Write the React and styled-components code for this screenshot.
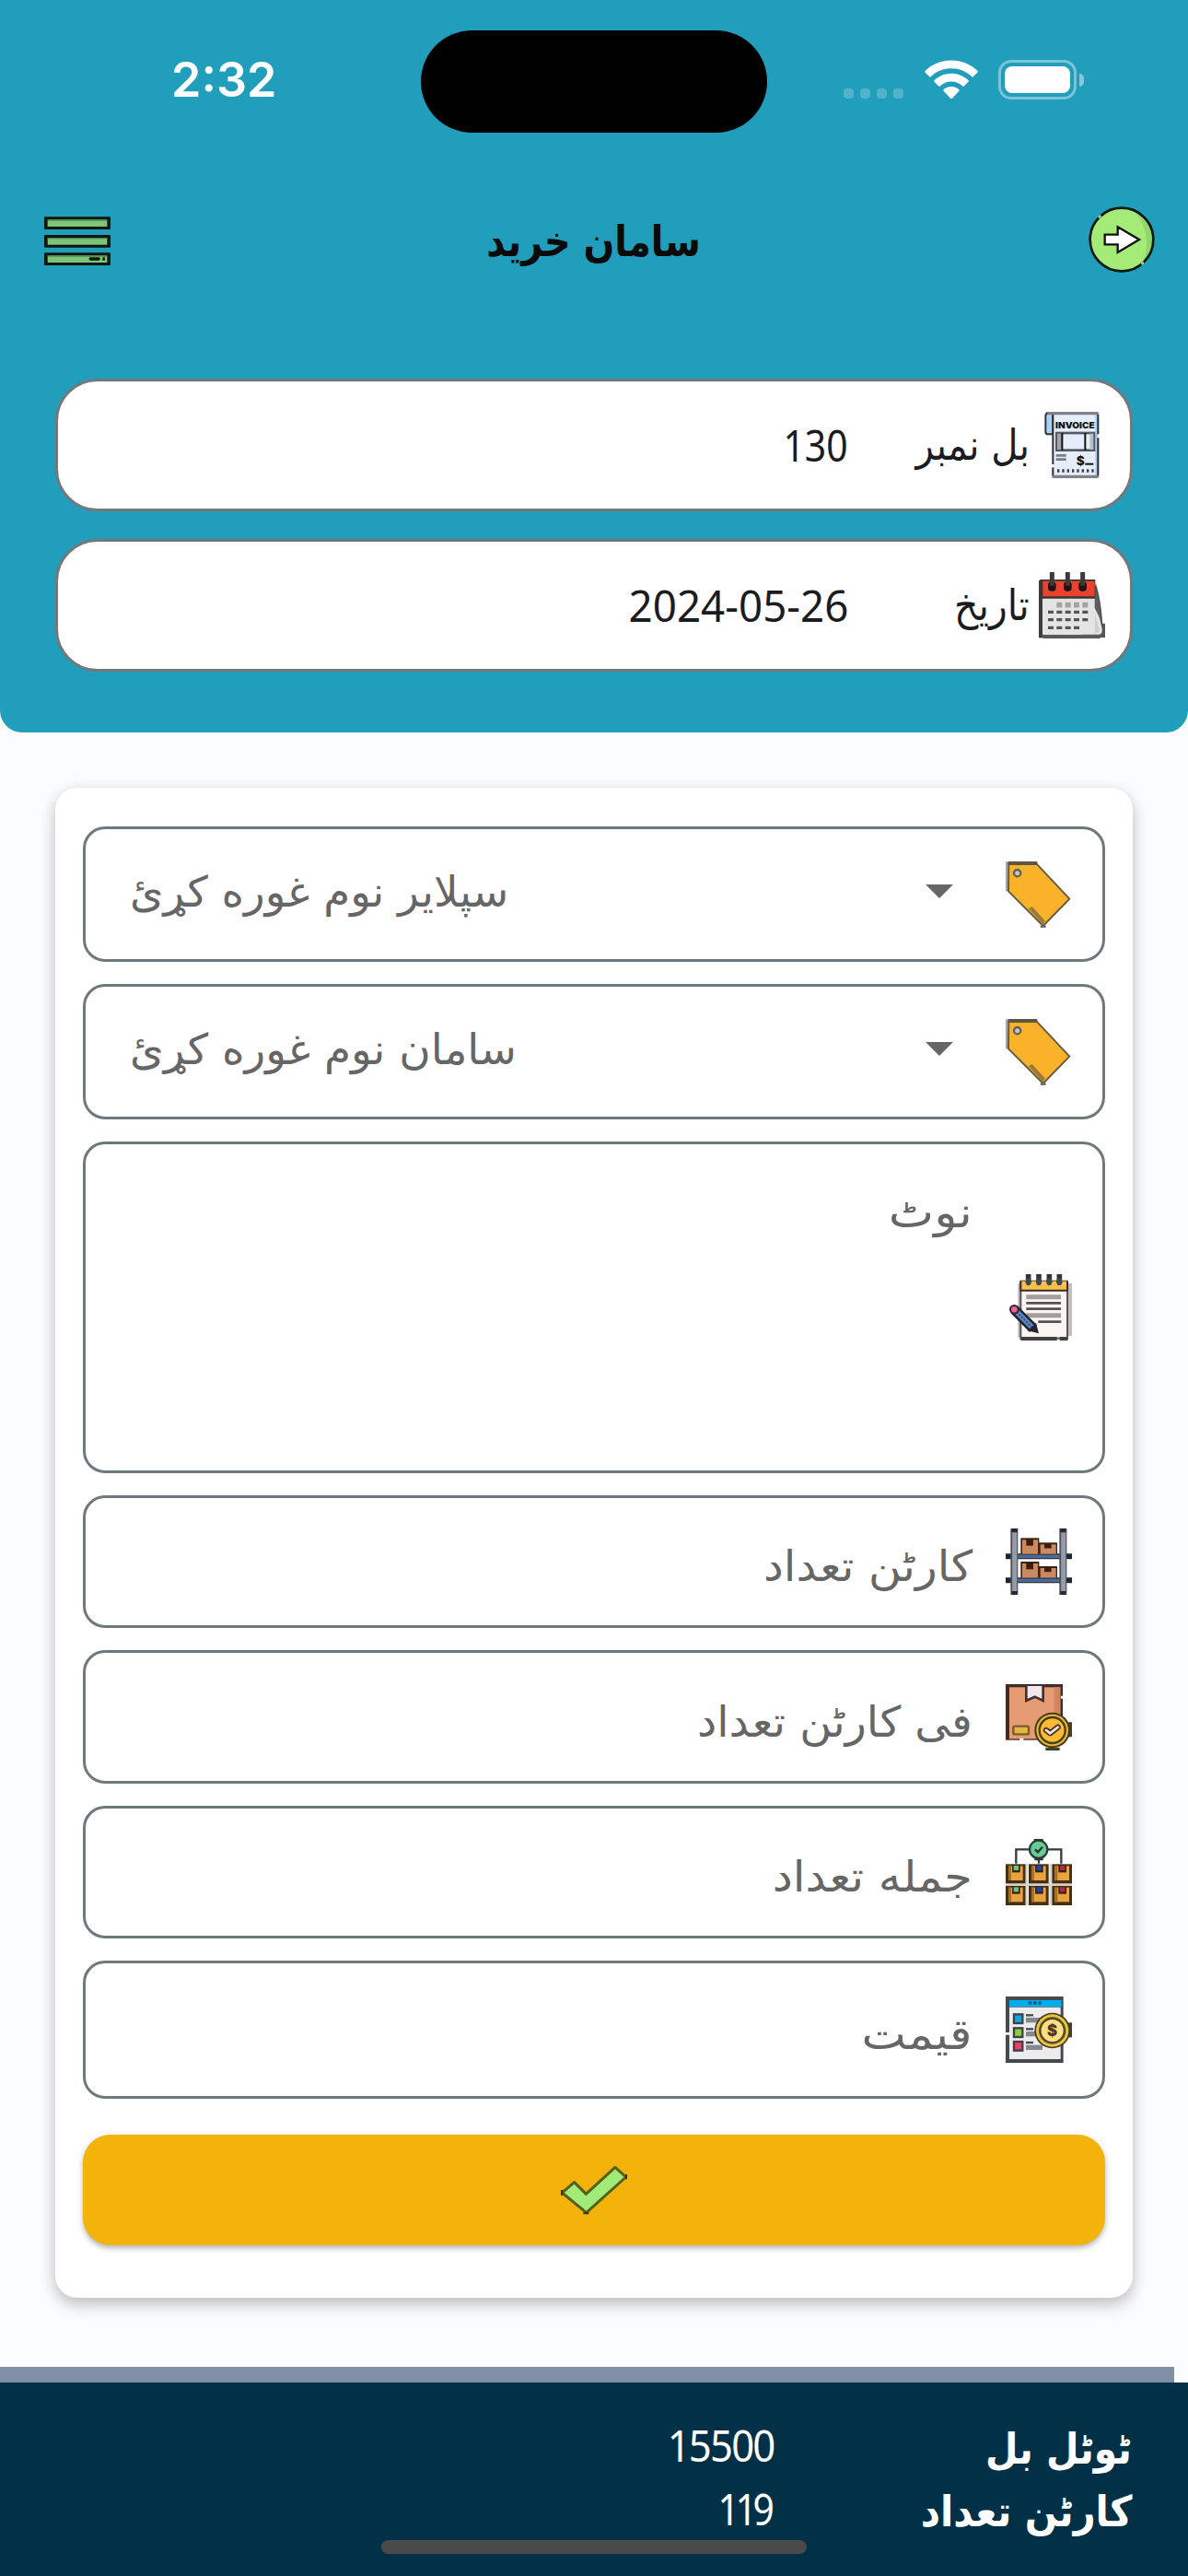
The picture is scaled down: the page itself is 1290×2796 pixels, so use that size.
import React from "react";
import styled, { createGlobalStyle } from "styled-components";

const GlobalStyle = createGlobalStyle`
  * { box-sizing: border-box; }
  html, body { margin: 0; padding: 0; background: #fbfcfe; }
`;

const Screen = styled.div`
  width: 1290px;
  height: 2796px;
  display: flex;
  flex-direction: column;
  overflow: hidden;
  background: #fbfcfe;
  font-family: "DejaVu Sans", "Noto Sans", sans-serif;
`;

/* ---------- header ---------- */
const Header = styled.header`
  height: 795px;
  flex: none;
  background: #219ebc;
  border-radius: 0 0 24px 24px;
`;

const StatusBar = styled.div`
  display: grid;
  grid-template-columns: 457px 376px 457px;
  align-items: center;
  height: 177px;
`;

const Clock = styled.span`
  padding: 0 0 3px 186px;
  font: 600 52px/64px Inter, sans-serif;
  color: #fff;
`;

const Island = styled.div`
  height: 111px;
  border-radius: 56px;
  background: #000;
`;

const StatusIcons = styled.div`
  display: flex;
  align-items: center;
  padding: 0 0 4px 83px;
`;

const SignalDots = styled.div`
  display: flex;
  gap: 7px;
  padding-top: 29px;
  margin-right: 23px;
`;

const Dot = styled.i`
  width: 11px;
  height: 11px;
  border-radius: 4px;
  background: rgba(255, 255, 255, 0.22);
`;

const BatteryShell = styled.div`
  width: 85px;
  height: 43px;
  margin-left: 22px;
  margin-right: 3px;
  padding: 4px;
  border: 3px solid rgba(255, 255, 255, 0.4);
  border-radius: 14px;
`;

const BatteryLevel = styled.div`
  height: 100%;
  border-radius: 8px;
  background: #fff;
`;

const BatteryTip = styled.i`
  width: 5px;
  height: 14px;
  border-radius: 0 6px 6px 0;
  background: rgba(255, 255, 255, 0.45);
`;

const AppBar = styled.div`
  display: flex;
  align-items: center;
  justify-content: space-between;
  height: 166px;
  padding: 0 36px 0 48px;
`;

const Icon = styled.svg`
  display: block;
  flex: none;
  width: 72px;
  height: 72px;
  direction: ltr;
`;

/* ---------- text ---------- */
const Label = styled.span`
  display: inline-block;
  white-space: nowrap;
  direction: rtl;
  font-size: 46px;
  line-height: 68px;
  font-weight: ${(p) => (p.$bold ? 700 : 400)};
  color: ${(p) => p.$color || "#666"};
  transform-origin: ${(p) => p.$origin || "right"} center;
  transform: translateY(${(p) => p.$drop || 0}px) scaleX(${(p) => p.$stretch || 1});
`;

const Title = styled(Label)`
  margin-right: 12px;
`;

const Digits = styled.span`
  display: inline-block;
  direction: ltr;
  white-space: nowrap;
  font: 400 47px/68px "Noto Sans", sans-serif;
  color: ${(p) => p.$color || "#1b1c20"};
  letter-spacing: ${(p) => p.$tracking || 0}px;
  margin-right: ${(p) => -(p.$tracking || 0)}px;
  transform-origin: right center;
  transform: scaleX(${(p) => p.$stretch || 1});
`;

/* ---------- bill summary ---------- */
const BillInfo = styled.div`
  display: flex;
  flex-direction: column;
  gap: 30px;
  padding: 68px 60px 0;
`;

const InfoCard = styled.div`
  direction: rtl;
  display: flex;
  align-items: center;
  height: 144px;
  padding: 0 27px;
  border: 3px solid #73787c;
  border-radius: 46px;
  background: #fff;
`;

const InfoLabel = styled.div`
  width: 197px;
  margin-right: 10px;
`;

/* ---------- form ---------- */
const Body = styled.main`
  flex: 1;
  padding: 60px 60px 0;
`;

const FormCard = styled.form`
  height: 1639px;
  margin: 0;
  padding: 42px 30px 0;
  display: flex;
  flex-direction: column;
  gap: 24px;
  border-radius: 24px;
  background: #fff;
  box-shadow: 0 9px 18px rgba(0, 0, 0, 0.17), 0 3px 16px rgba(0, 0, 0, 0.11);
`;

const Field = styled.div`
  direction: rtl;
  flex: none;
  display: flex;
  align-items: center;
  height: ${(p) => p.$height || 144.4}px;
  padding-right: 33px;
  border: 3px solid #6f797d;
  border-radius: 24px;
`;

const SelectField = styled(Field)`
  height: 147px;
  padding-left: 48px;
`;

const Caret = styled.svg`
  width: 30px;
  height: 15px;
  flex: none;
  margin-right: 57px;
  margin-bottom: 6px;
  margin-left: auto;
  fill: #666;
`;

const Placeholder = styled.div`
  align-self: ${(p) => (p.$top ? "flex-start" : "center")};
  padding-top: ${(p) => (p.$top ? 40 : 0)}px;
  margin-right: 36px;
`;

const SubmitButton = styled.button`
  flex: none;
  display: flex;
  align-items: center;
  justify-content: center;
  height: 120px;
  margin-top: 15px;
  padding: 0;
  border: 0;
  border-radius: 30px;
  background: #f3b30a;
  box-shadow: 0 3px 6px rgba(0, 0, 0, 0.3);
`;

/* ---------- footer ---------- */
const Divider = styled.div`
  flex: none;
  width: 1275px;
  height: 17px;
  background: #8090a6;
`;

const Footer = styled.footer`
  flex: none;
  display: flex;
  flex-direction: column;
  height: 210px;
  padding: 33px 61px 0;
  background: #023047;
`;

const TotalRow = styled.div`
  direction: rtl;
  display: flex;
  align-items: center;
  height: 69.5px;
`;

const TotalLabel = styled.div`
  width: 387px;
`;

const HomeIndicator = styled.div`
  flex: none;
  align-self: center;
  width: 462px;
  height: 15px;
  margin-top: -1px;
  border-radius: 8px;
  background: #4a4a4a;
`;

/* ---------- icons ---------- */
const Wifi = () => (
  <svg width="58" height="43" viewBox="0 0 58 43" fill="#fff">
    <path d="M29 0.5C40 0.5 50 4.8 57.3 11.8a1.4 1.4 0 0 1 0 2L53 18a1.4 1.4 0 0 1-2 0A31.5 31.5 0 0 0 29 9.300 31.500 31.500 0 0 0 7 18a1.400 1.400 0 0 1-2 0L.7 13.800a1.400 1.400 0 0 1 0-2C8 4.800 18 .5 29 .5z" />
    <path d="M29 14.800c7 0 13.500 2.700 18.300 7.200a1.400 1.400 0 0 1 0 2L43 28.200a1.400 1.400 0 0 1-2 0 17.500 17.500 0 0 0-24 0 1.400 1.400 0 0 1-2 0L10.700 24a1.400 1.400 0 0 1 0-2A26.800 26.800 0 0 1 29 14.800z" />
    <path d="M29 29c3.200 0 6 1.100 8.200 3a1.400 1.400 0 0 1 0 2.100l-7.200 7.700a1.400 1.400 0 0 1-2 0l-7.200-7.700a1.400 1.400 0 0 1 0-2.100C23 30.100 25.800 29 29 29z" />
  </svg>
);

const MenuIcon = () => (
  <Icon viewBox="144 672 216 216">
    {[706, 765, 823].map((y) => (
      <g key={y}>
        <rect x="144" y={y} width="216" height="41" rx="3" fill="#10170f" />
        <rect x="155" y={y + 9} width="194" height="23" fill="#7cc67c" />
        <rect x="155" y={y + 9} width="194" height="4" fill="#4f8350" />
      </g>
    ))}
    <rect x="290" y="838" width="36" height="10" rx="4" fill="#10170f" />
    <rect x="334" y="838" width="8" height="10" rx="3" fill="#10170f" />
  </Icon>
);

const NextIcon = () => (
  <Icon viewBox="96 42 216 216">
    <circle cx="204" cy="150" r="104" fill="#a5eb78" />
    <path d="M240 54A104 104 0 0 1 268 232C296 180 292 100 240 54z" fill="#93d56c" />
    <circle cx="204" cy="150" r="103" fill="none" stroke="#0e1a12" strokeWidth="8" />
    <path d="M129 79l7-7M268 230l8-5" stroke="#8fd9a0" strokeWidth="8" />
    <path d="M149 134h42v-25l70 41-70 42v-26h-42z" fill="#fff" stroke="#111" strokeWidth="7" />
  </Icon>
);

const InvoiceIcon = () => (
  <Icon viewBox="204 141 216 216">
    <path d="M250 214h-16q-8 0-8-8v-50q0-12 10-12h14z" fill="#a9d2f5" stroke="#30353c" strokeWidth="6" />
    <rect x="250" y="146" width="147" height="208" rx="4" fill="#e6edfa" />
    <path d="M388 150h9v202h-9z" fill="#a9cdf2" />
    <path d="M250 146v166M250 322v30M397 148v66M397 226v126" stroke="#2a2f36" strokeWidth="6" />
    <path d="M232 146h166M248 352h150" stroke="#7f8286" strokeWidth="10" />
    <text x="258" y="195" fontFamily="Inter, sans-serif" fontWeight="900" fontSize="28" textLength="128" lengthAdjust="spacingAndGlyphs" fill="#111">INVOICE</text>
    <rect x="262" y="210" width="122" height="56" fill="#e6edfa" stroke="#55595f" strokeWidth="8" />
    <path d="M264 212h16v52h-16z" fill="#9fa4ab" />
    <path d="M280 210v56M355 210v56" stroke="#111" strokeWidth="6" />
    <path d="M370 212h12v52h-12z" fill="#b9c0c9" />
    <path d="M260 283h33M260 296h33" stroke="#777d84" strokeWidth="8" />
    <text x="326" y="314" fontFamily="Inter, sans-serif" fontWeight="800" fontSize="41" fill="#111">$</text>
    <path d="M355 311h27" stroke="#111" strokeWidth="6" />
    <path d="M264 333h120" stroke="#3a3f45" strokeWidth="10" strokeDasharray="7 9" />
  </Icon>
);

const CalendarIcon = () => (
  <Icon viewBox="204 663 216 216">
    <path d="M390 700q16 50 22 130h8v46h-80z" fill="#555" />
    <path d="M204 690h14v187h-14z" fill="#3d3d3d" />
    <path d="M214 866h190v13H218z" fill="#5a5a5a" />
    <path d="M216 748h172l22 100q2 18-12 18H216z" fill="#e4e4e4" />
    <path d="M386 700l14 60 6 60-20-40z" fill="#5f5f5f" />
    <path d="M388 800l14 56-16 8z" fill="#cfcfcf" />
    <path d="M208 687h180v62H208z" fill="#3c3534" />
    <path d="M217 692h169v50H217z" fill="#e8432f" />
    {[247, 298, 347].map((x) => (
      <g key={x}>
        <rect x={x - 13} y="694" width="26" height="31" rx="11" fill="#211314" />
        <path d={`M${x} 663v44`} stroke="#3a3a3a" strokeWidth="15" />
      </g>
    ))}
    <path d="M262 770h104" stroke="#a3a3a3" strokeWidth="17" strokeDasharray="18 10" />
    <path d="M234 793h132M234 818h132M234 844h104" stroke="#555" strokeWidth="10" strokeDasharray="18 10" />
  </Icon>
);

const TagIcon = () => (
  <Icon viewBox="96 103 216 216">
    <path d="M98 104v96" stroke="#a6a6a6" strokeWidth="11" />
    <path d="M106 108h88l110 117-86 88-113-113z" fill="#fbb22b" stroke="#665c45" strokeWidth="6" strokeLinejoin="round" />
    <path d="M104 109h95" stroke="#5e5542" strokeWidth="12" />
    <path d="M170 256l12-6 42 46-6 12z" fill="#9a7a36" />
    <circle cx="134" cy="141" r="11" fill="#c9c5c0" stroke="#66604f" strokeWidth="7" />
    <path d="M209 315h18" stroke="#666" strokeWidth="7" />
  </Icon>
);

const NoteIcon = () => (
  <Icon viewBox="96 69 216 216">
    <path d="M136 100h12v175h-12zM298 98h14v172h-14z" fill="#c2bdbd" />
    <rect x="145" y="92" width="152" height="186" fill="#faf5f3" stroke="#5b5350" strokeWidth="6" />
    <path d="M145 92h153v30H145z" fill="#fbc04a" />
    <path d="M143 122h156" stroke="#352d26" strokeWidth="6" />
    <path d="M145 92v30M297 92v30" stroke="#3a2f20" strokeWidth="6" />
    {[170, 204, 238, 271].map((x) => (
      <g key={x}>
        <path d={`M${x} 69v30`} stroke="#2f363b" strokeWidth="17" />
        <ellipse cx={x} cy="94" rx="9" ry="12" fill="#3d4a52" />
      </g>
    ))}
    <path d="M163 143h113M163 203h113" stroke="#a49f9e" strokeWidth="15" />
    <path d="M163 163h113M163 182h113M202 224h75" stroke="#565251" strokeWidth="8" />
    <path d="M145 279h118M272 279h26" stroke="#404040" strokeWidth="12" />
    <path d="M124 184l62 62" stroke="#23242c" strokeWidth="33" />
    <path d="M128 188l54 54" stroke="#5c86c4" strokeWidth="18" />
    <path d="M132 192l50 50" stroke="#2f4875" strokeWidth="5" strokeDasharray="6 5" />
    <circle cx="124" cy="184" r="16" fill="#33202b" />
    <circle cx="124" cy="184" r="10" fill="#e9669b" />
    <path d="M195 228l9 34-36-9z" fill="#25252a" />
  </Icon>
);

const Parcel = ({ x, y, w, h }) => (
  <g>
    <rect x={x} y={y} width={w} height={h} fill="#3b2416" />
    <rect x={x + 5} y={y + 6} width={w - 9} height={h - 6} fill="#c98a61" />
    <rect x={x + w * 0.3} y={y + 3} width={w * 0.38} height={h * 0.42} fill="#3b1d10" />
  </g>
);

const ShelfIcon = () => (
  <Icon viewBox="96 897 216 216">
    <path d="M96 988h216M96 1066h216" stroke="#1e2731" strokeWidth="18" />
    <path d="M114 988h180M114 1066h180" stroke="#4c6a94" strokeWidth="11" />
    <Parcel x={145} y={928} w={60} h={52} />
    <Parcel x={204} y={943} w={60} h={37} />
    <Parcel x={145} y={1005} w={60} h={52} />
    <Parcel x={204} y={1020} w={60} h={37} />
    <path d="M124 897v216M283 897v216" stroke="#4a5158" strokeWidth="24" />
    <path d="M125 909v192M284 909v192" stroke="#959ca8" strokeWidth="15" />
    <path d="M125 897v13M125 1101v12M283 897v13M283 1101v12" stroke="#25282c" strokeWidth="18" />
  </Icon>
);

const CartonIcon = () => (
  <Icon viewBox="96 84 216 216">
    <rect x="96" y="84" width="186" height="182" fill="#3f2d27" />
    <rect x="108" y="94" width="166" height="168" fill="#e69c73" />
    <path d="M254 94h20v90h-20z" fill="#d48460" />
    <path d="M163 86h55v52l-27-13-28 13z" fill="#f0e8ee" stroke="#3f3032" strokeWidth="8" />
    <rect x="121" y="221" width="50" height="26" rx="4" fill="#e0b93d" stroke="#7c5a2c" strokeWidth="7" />
    <path d="M312 208v48h-12v-48zM226 290h46v10h-46z" fill="#44402f" />
    <circle cx="248" cy="234" r="58" fill="#47391b" />
    <circle cx="248" cy="234" r="52" fill="#e2b938" />
    <circle cx="248" cy="234" r="42" fill="#fdbb34" stroke="#4c3d1a" strokeWidth="7" />
    <path d="M228 234l13 10 25-20" fill="none" stroke="#4b3a27" strokeWidth="19" strokeLinecap="round" strokeLinejoin="round" />
    <path d="M228 234l13 10 25-20" fill="none" stroke="#ece4ee" strokeWidth="8" strokeLinecap="round" strokeLinejoin="round" />
    <path d="M142 265h12M276 127h12" stroke="#fff" strokeWidth="9" />
  </Icon>
);

const StockIcon = () => (
  <Icon viewBox="96 588 216 216">
    <path d="M130 668v-46h147v46M204 650v18" fill="none" stroke="#3a3a3a" strokeWidth="7" />
    <circle cx="203" cy="622" r="29" fill="#6cc894" stroke="#27423a" strokeWidth="7" />
    <path d="M188 591h30M190 654h28" stroke="#333" strokeWidth="7" />
    <path d="M192 622l9 9 15-17" fill="none" stroke="#173d31" strokeWidth="7" />
    {[670, 740].map((y) =>
      [[96, "#5fc890"], [171, "#2140a8"], [247, "#c81e4e"]].map(([x, c]) => (
        <g key={`${x}-${y}`}>
          <rect x={x} y={y} width="65" height="64" fill="#463012" />
          <rect x={x + 9} y={y + 6} width="47" height="47" fill="#e8a23f" />
          <rect x={x + 9} y={y + 6} width="9" height="47" fill="#a86f24" />
          <rect x={x + 21} y={y + 3} width="26" height="24" fill="#33260f" />
          <rect x={x + 26} y={y + 5} width="16" height="15" fill={c} />
        </g>
      ))
    )}
    <path d="M165 668v136M242 668v136M96 737h216" stroke="#d9d4cd" strokeWidth="7" />
  </Icon>
);

const PriceIcon = () => (
  <Icon viewBox="96 1101 216 216">
    <rect x="96" y="1101" width="188" height="216" fill="#454a4c" />
    <rect x="108" y="1136" width="167" height="169" fill="#ececee" />
    <rect x="108" y="1113" width="170" height="21" fill="#00aef0" />
    <path d="M170 1122h42" stroke="#0b5f83" strokeWidth="10" strokeDasharray="11 5" />
    {[[1173, "#15a5da"], [1218, "#8fcb45"], [1262, "#ee3d68"]].map(([y, c]) => (
      <g key={y}>
        <rect x="123" y={y - 14} width="28" height="29" fill={c} stroke="#3c4347" strokeWidth="7" />
        <path d={`M162 ${y - 11}h24`} stroke="#44484c" strokeWidth="7" />
        <path d={`M162 ${y + 5}h54`} stroke="#86898c" strokeWidth="16" />
      </g>
    ))}
    <path d="M299 1186h13v48h-13z" fill="#44402f" />
    <circle cx="248" cy="1212" r="58" fill="#453a1e" />
    <circle cx="248" cy="1212" r="53" fill="#e8c33d" />
    <circle cx="248" cy="1212" r="40" fill="#fbdf84" stroke="#5b4b24" strokeWidth="8" />
    <text x="248" y="1230" textAnchor="middle" fontFamily="Inter, sans-serif" fontWeight="900" fontSize="50" fill="#4a3b22">$</text>
    <path d="M96 1222h12" stroke="#fff" strokeWidth="8" />
  </Icon>
);

const CheckIcon = () => (
  <Icon viewBox="0 235 216 216">
    <path d="M177 269l35 32-129 116-79-65 40-34 38 38z" fill="#a3eb78" stroke="#54611b" strokeWidth="9" strokeLinejoin="round" />
    <path d="M3 343v18M73 419h18M213 292v16" stroke="#2c3410" strokeWidth="6" />
  </Icon>
);

const selects = [
  { text: "سپلایر نوم غوره کړئ", stretch: 1.017 },
  { text: "سامان نوم غوره کړئ", stretch: 1.021 },
];

const inputs = [
  { text: "کارٹن تعداد", stretch: 1.066, icon: ShelfIcon },
  { text: "فی کارٹن تعداد", stretch: 1.038, icon: CartonIcon },
  { text: "جمله تعداد", stretch: 1.076, icon: StockIcon },
  { text: "قیمت", stretch: 1.115, icon: PriceIcon, height: 149.6 },
];

export default function App() {
  return (
    <Screen>
      <GlobalStyle />
      <Header>
        <StatusBar>
          <Clock>2:32</Clock>
          <Island />
          <StatusIcons>
            <SignalDots><Dot /><Dot /><Dot /><Dot /></SignalDots>
            <Wifi />
            <BatteryShell><BatteryLevel /></BatteryShell>
            <BatteryTip />
          </StatusIcons>
        </StatusBar>
        <AppBar>
          <MenuIcon />
          <Title $bold $color="#0a0a0a" $origin="center" $stretch={0.864} $drop={2}>سامان خرید</Title>
          <NextIcon />
        </AppBar>
        <BillInfo>
          <InfoCard>
            <InvoiceIcon />
            <InfoLabel><Label $color="#1b1c20" $stretch={0.875}>بل نمبر</Label></InfoLabel>
            <Digits $stretch={0.87}>130</Digits>
          </InfoCard>
          <InfoCard>
            <CalendarIcon />
            <InfoLabel><Label $color="#1b1c20" $stretch={0.89}>تاریخ</Label></InfoLabel>
            <Digits $stretch={0.973}>2024-05-26</Digits>
          </InfoCard>
        </BillInfo>
      </Header>

      <Body>
        <FormCard>
          {selects.map((s) => (
            <SelectField key={s.text}>
              <TagIcon />
              <Caret viewBox="0 0 30 15"><path d="M0 0h30L15 15z" /></Caret>
              <Label $origin="left" $stretch={s.stretch} $drop={-3}>{s.text}</Label>
            </SelectField>
          ))}
          <Field $height={360}>
            <NoteIcon />
            <Placeholder $top><Label $stretch={1.14}>نوٹ</Label></Placeholder>
          </Field>
          {inputs.map(({ text, stretch, icon: Glyph, height }) => (
            <Field key={text} $height={height}>
              <Glyph />
              <Placeholder><Label $stretch={stretch} $drop={5}>{text}</Label></Placeholder>
            </Field>
          ))}
          <SubmitButton type="button" aria-label="submit">
            <CheckIcon />
          </SubmitButton>
        </FormCard>
      </Body>

      <Divider />
      <Footer>
        <TotalRow>
          <TotalLabel><Label $bold $color="#fff" $stretch={0.888} $drop={4}>ٹوٹل بل</Label></TotalLabel>
          <Digits $color="#fff" $stretch={0.93} $tracking={-2}>15500</Digits>
        </TotalRow>
        <TotalRow>
          <TotalLabel><Label $bold $color="#fff" $stretch={0.903} $drop={3}>کارٹن تعداد</Label></TotalLabel>
          <Digits $color="#fff" $stretch={0.87} $tracking={-5}>119</Digits>
        </TotalRow>
        <HomeIndicator />
      </Footer>
    </Screen>
  );
}
